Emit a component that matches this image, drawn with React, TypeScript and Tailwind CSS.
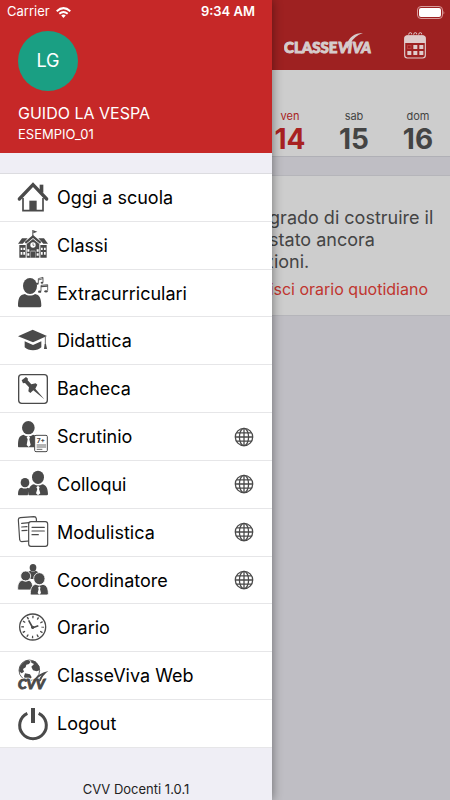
import type { ReactNode } from "react";

type MenuItem = {
  label: string;
  icon: ReactNode;
  web?: boolean;
};

function Icon({ children }: { children: ReactNode }) {
  return (
    <svg
      viewBox="0 0 90 90"
      className="h-[30px] w-[30px] shrink-0 overflow-visible"
      fill="currentColor"
      aria-hidden="true"
    >
      {children}
    </svg>
  );
}

const menu: MenuItem[] = [
  {
    label: "Oggi a scuola",
    icon: (
      <Icon>
        <path d="M65 8h11v24H65z" />
        <path d="M4 51 45 8l41 43" fill="none" stroke="currentColor" strokeWidth="10" strokeLinecap="round" />
        <path d="M15 48v38h60V48" fill="none" stroke="currentColor" strokeWidth="5" />
        <path d="M34 56h22v31H34z" />
      </Icon>
    ),
  },
  {
    label: "Classi",
    icon: (
      <Icon>
        <path d="M43 0h3v18h-3z" />
        <path d="M46 1l12 4-12 5z" />
        <path d="M45 15 70 36l-4 5-21-17-21 17-4-5z" />
        <path d="M12 25h17L14 41H0zM61 25h17l12 16H76z" />
        <path d="M4 45h19v38H4zM67 45h19v38H67zM26 42l19-15 19 15v41H26z" />
        <circle cx="45" cy="45" r="8" fill="#fff" />
        <path d="M45 40v6h4" fill="none" stroke="currentColor" strokeWidth="2" />
        <path d="M38 62h14v21H38zM8 53h5v7H8zM16 53h5v7h-5zM8 66h5v8H8zM16 66h5v8h-5zM28 58h6v7h-6zM28 70h6v7h-6zM56 58h6v7h-6zM56 70h6v7h-6zM69 53h5v7h-5zM78 53h5v7h-5zM69 66h5v8h-5zM78 66h5v8h-5z" fill="#fff" />
        <path d="M39 64h12v19H39z" />
      </Icon>
    ),
  },
  {
    label: "Extracurriculari",
    icon: (
      <Icon>
        <ellipse cx="36" cy="24" rx="21" ry="24" />
        <path d="M0 84c0-23 5-34 21-36 8 6 22 6 30 0 13 2 19 13 19 36q-1 4-5 4H5q-4 0-5-4z" />
        <g fill="none" stroke="currentColor" strokeWidth="2.5">
          <path d="M61 16V2l14-4v15" />
          <path d="M61 6l14-4" />
          <path d="M69 39V22l20-2v18" />
          <path d="M69 26l20-2" strokeWidth="4" />
        </g>
        <ellipse cx="58" cy="17" rx="4" ry="3" />
        <ellipse cx="72" cy="14" rx="4" ry="3" />
        <ellipse cx="65" cy="41" rx="5" ry="3.5" />
        <ellipse cx="84" cy="40" rx="5" ry="3.5" />
      </Icon>
    ),
  },
  {
    label: "Didattica",
    icon: (
      <Icon>
        <path d="M0 31 44 11l43 19-42 19z" />
        <path d="M20 46l25 11 25-11v18q-9 9-25 9t-25-9z" />
        <path d="M82 32v24" stroke="currentColor" strokeWidth="2.5" />
        <path d="M80 54h4l3 15h-9z" />
      </Icon>
    ),
  },
  {
    label: "Bacheca",
    icon: (
      <Icon>
        <rect x="2" y="2" width="86" height="86" rx="9" fill="none" stroke="currentColor" strokeWidth="4" />
        <path d="M11 19 24 9l6 5-1 5 11 12 13-3 5 4-6 12 27 32-33-27-9 8-6-5 2-12-12-13-6 1z" />
      </Icon>
    ),
  },
  {
    label: "Scrutinio",
    web: true,
    icon: (
      <Icon>
        <ellipse cx="31" cy="17" rx="19" ry="20" />
        <path d="M0 73c0-23 3-32 17-35 8 6 20 6 28 0l12 4v34H2q-2 0-2-3z" />
        <path d="M31 41l5 5-2 6 4 17-6 6-6-6 3-17-3-6z" fill="#fff" />
        <rect x="50" y="40" width="38" height="49" rx="4" fill="#fff" stroke="currentColor" strokeWidth="3" />
        <text x="56" y="62" fontSize="20" fontWeight="700" fontFamily="Inter, sans-serif">7+</text>
        <path d="M56 69h28M56 75h28M56 82h17" stroke="currentColor" strokeWidth="2.5" />
      </Icon>
    ),
  },
  {
    label: "Colloqui",
    web: true,
    icon: (
      <Icon>
        <ellipse cx="21" cy="41" rx="13" ry="14" />
        <path d="M0 76c0-12 3-19 11-20q10 5 18 0l7 3-7 20H2q-2 0-2-3z" />
        <ellipse cx="60" cy="25" rx="18" ry="20" />
        <path d="M31 75c1-19 6-27 17-29 8 5 17 5 25 0 11 2 16 10 17 29q0 4-4 4H34q-3 0-3-4z" />
        <path d="M60 50l5 5-2 5 4 13-7 6-6-6 4-13-3-5z" fill="#fff" />
      </Icon>
    ),
  },
  {
    label: "Modulistica",
    web: true,
    icon: (
      <Icon>
        <g fill="#fff" stroke="currentColor" strokeWidth="3.5" strokeLinecap="round">
          <path d="M7 2 48-1q6 0 7 6l3 65-47 4q-5 0-6-6L1 8q0-5 6-6z" />
          <path d="M11 19l23-2M11 30l16-1M12 41l15-1" />
          <rect x="32" y="14" width="57" height="74" rx="7" />
          <path d="M42 31h37M42 42h37M42 53h19" />
        </g>
      </Icon>
    ),
  },
  {
    label: "Coordinatore",
    web: true,
    icon: (
      <Icon>
        <ellipse cx="45" cy="8" rx="10" ry="11" />
        <path d="M28 24q1-5 9-7 8 5 16 0 10 3 10 13v12H38z" />
        <g stroke="#fff" strokeWidth="2.5">
          <ellipse cx="23" cy="33" rx="15" ry="15" />
          <path d="M-1 72c0-15 4-24 14-26q10 6 20 0 12 3 12 29H2q-3 0-3-3z" />
          <ellipse cx="64" cy="41" rx="17" ry="18" />
          <path d="M37 86c0-17 6-26 16-28q11 6 22 0c11 3 16 11 16 28q0 4-4 4H41q-4 0-4-4z" />
        </g>
        <path d="M64 64l4 4-2 4 3 12-5 5-5-5 3-12-2-4z" fill="#fff" />
      </Icon>
    ),
  },
  {
    label: "Orario",
    icon: (
      <Icon>
        <circle cx="44" cy="42" r="39" fill="none" stroke="currentColor" strokeWidth="4" />
        <circle cx="44" cy="42" r="30" fill="none" stroke="currentColor" strokeWidth="8" strokeDasharray="4 11.7" strokeDashoffset="2" />
        <path d="M32 22l12 22 17-6" fill="none" stroke="currentColor" strokeWidth="5" />
        <circle cx="44" cy="43" r="5" />
      </Icon>
    ),
  },
  {
    label: "ClasseViva Web",
    icon: (
      <Icon>
        <circle cx="34" cy="28" r="31" fill="#fff" stroke="currentColor" strokeWidth="2.5" />
        <path d="M5 19Q13 1 30-3l8 5-5 7-8 2-2 8-8 5 3 8-7 5-8-6zM39-1l13 2 12 15 1 12-9 3-11-3-5-11 8-8-8-4zM21 37l15 3 5 9-10 12-9-3-4-12z" />
        <text x="0" y="85" fontSize="42" fontWeight="900" fontStyle="italic" fontFamily="Lato, sans-serif" stroke="#fff" strokeWidth="8">
          CVV
        </text>
        <text x="0" y="85" fontSize="42" fontWeight="900" fontStyle="italic" fontFamily="Lato, sans-serif" stroke="currentColor" strokeWidth="3">
          CVV
        </text>
        <path d="M47 58Q58 38 91 30 74 43 68 60l-6 2q2-12 9-19-11 5-17 17z" />
      </Icon>
    ),
  },
  {
    label: "Logout",
    icon: (
      <Icon>
        <path d="M28 13a40 40 0 1 0 34 0" fill="none" stroke="currentColor" strokeWidth="9" />
        <path d="M39-3h12v45H39z" />
      </Icon>
    ),
  },
];

// "web" badge for the sections that open in the browser
function WebGlobe() {
  return (
    <svg
      viewBox="0 0 20 20"
      className="h-5 w-5 shrink-0"
      fill="none"
      stroke="currentColor"
      strokeWidth="1.3"
      aria-hidden="true"
    >
      <circle cx="10" cy="10" r="8.7" />
      <ellipse cx="10" cy="10" rx="4.6" ry="8.7" />
      <path d="M10 1v18M1 10h18M2.5 5.8h15M2.5 14.2h15" />
    </svg>
  );
}

function WifiIcon() {
  return (
    <svg viewBox="0 0 46 34" className="h-[11px] w-[15px]" fill="none" stroke="#fff" strokeWidth="6" aria-hidden="true">
      <path d="M2 13Q23-6 44 13" />
      <path d="M10 21q13-11 26 0" />
      <path d="M23 34l-7-8q7-5 14 0z" fill="#fff" stroke="none" />
    </svg>
  );
}

function BatteryIcon() {
  return (
    <svg viewBox="0 0 28 13" className="h-[13px] w-7" aria-hidden="true">
      <rect x="0.5" y="0.5" width="25" height="12" rx="3.5" fill="none" stroke="#d99a9a" />
      <rect x="2" y="2" width="22" height="9" rx="2" fill="#fff" />
      <path d="M26.5 4.5q1.5 2 0 4z" fill="#d99a9a" />
    </svg>
  );
}

function Logo() {
  return (
    <svg viewBox="0 0 92 24" className="h-6 w-[92px]" fill="#d6cccc" role="img" aria-label="ClasseViva">
      <g fontFamily="Lato, sans-serif" fontWeight="900" fontSize="15" stroke="#d6cccc" strokeWidth="1">
        <text x="0" y="21">CLASSE</text>
        <text x="54" y="21" fontStyle="italic">VIVA</text>
      </g>
      <path d="M62 14Q66 1 79 1 70 4 66 12l-3 5z" />
    </svg>
  );
}

function CalendarIcon() {
  return (
    <svg viewBox="0 0 66 81" className="h-[27px] w-[22px]" fill="none" stroke="#dfcccc" aria-hidden="true">
      <rect x="2" y="12" width="62" height="66" rx="8" strokeWidth="3.5" />
      <path d="M2 33V18q0-8 8-8h46q8 0 8 8v15z" fill="#dfcccc" stroke="none" />
      <path d="M14 8q0-6 5-6t4 5M29 8q0-6 5-6t4 5M44 8q0-6 5-6t4 5" strokeWidth="3" />
      <rect x="11" y="40" width="10" height="10" stroke="#c64a4a" strokeWidth="2" />
      <path d="M28 39h12v12H28zM46 39h12v12H46zM10 57h12v12H10zM28 57h12v12H28zM46 57h12v12H46z" fill="#dfcccc" stroke="none" />
    </svg>
  );
}

const days = [
  { name: "ven", number: 14, active: true },
  { name: "sab", number: 15, active: false },
  { name: "dom", number: 16, active: false },
];

function Drawer() {
  return (
    <aside className="relative z-10 flex w-[272px] shrink-0 flex-col bg-[#efeef5] shadow-[0_0_10px_rgba(0,0,0,0.45)]">

      {/* PROFILE */}
      <header className="bg-[#c62828] pb-2.5 text-white">
        <div className="flex h-6 items-center justify-between pr-[17px] pl-[7px] text-[13px]">
          <div className="flex items-center gap-1.5">
            <span>Carrier</span>
            <WifiIcon />
          </div>
          <span className="font-semibold">9:34 AM</span>
        </div>
        <div className="px-[18px] pt-[7px]">
          <div className="flex h-[60px] w-[60px] items-center justify-center rounded-full bg-[#1a9f83] text-lg">
            LG
          </div>
          <h1 className="mt-2.5 text-base leading-6">GUIDO LA VESPA</h1>
          <p className="text-[13px] leading-[18px]">ESEMPIO_01</p>
        </div>
      </header>

      {/* MENU */}
      <nav className="mt-5 flex flex-1 flex-col">
        <ul className="flex flex-1 flex-col border-t border-[#dcdce0] bg-white">
          {menu.map((item) => (
            <li key={item.label} className="flex min-h-11 flex-1 border-b border-[#e6e6e8]">
              <a href="#" className="flex flex-1 items-center gap-[9px] pr-[18px] pl-[18px] text-[#4a4a4a]">
                {item.icon}
                <span className="flex-1 pt-px text-lg text-black">{item.label}</span>
                {item.web && <WebGlobe />}
              </a>
            </li>
          ))}
        </ul>
      </nav>

      <footer className="pt-8 pb-0.5 text-center text-[13px] leading-[18px] text-[#222]">
        CVV Docenti 1.0.1
      </footer>
    </aside>
  );
}

export default function App() {
  return (
    <div className="flex min-h-screen overflow-hidden bg-[#bfbec4] font-['Inter',sans-serif]">
      <Drawer />

      {/* PAGE BEHIND THE DRAWER */}
      <main className="min-w-0 flex-1">
        <header className="bg-[#9e2121]">
          <div className="flex h-6 items-center justify-end pr-[5px]">
            <BatteryIcon />
          </div>
          <div className="flex h-[46px] items-start justify-between pr-6 pl-3">
            <div className="pt-2">
              <Logo />
            </div>
            <button type="button" aria-label="Calendario" className="pt-2">
              <CalendarIcon />
            </button>
          </div>
        </header>

        <div className="flex justify-end border-b border-[#b0b0b6] bg-[#cdcdcd] pt-[37px] pb-0.5">
          {days.map((day) => (
            <div
              key={day.name}
              className={
                day.active
                  ? "w-16 shrink-0 text-center text-[#a82222]"
                  : "w-16 shrink-0 text-center text-[#444]"
              }
            >
              <div className="text-[11px] leading-[18px]">{day.name}</div>
              <div className="text-[28px] leading-[29px] font-bold">{day.number}</div>
            </div>
          ))}
        </div>

        <section className="mt-[18px] border-y border-[#b5b5ba] bg-[#cdcdcd] pt-[31px] pb-3.5">
          <p className="-ml-2 text-lg leading-[22px] whitespace-pre text-[#444]">
            {" grado di costruire il\n stato ancora\nzioni."}
          </p>
          <div className="mt-1 flex justify-end pr-[22px]">
            <button type="button" className="text-base leading-6 whitespace-nowrap text-[#c0352f]">
              nisci orario quotidiano
            </button>
          </div>
        </section>
      </main>
    </div>
  );
}
